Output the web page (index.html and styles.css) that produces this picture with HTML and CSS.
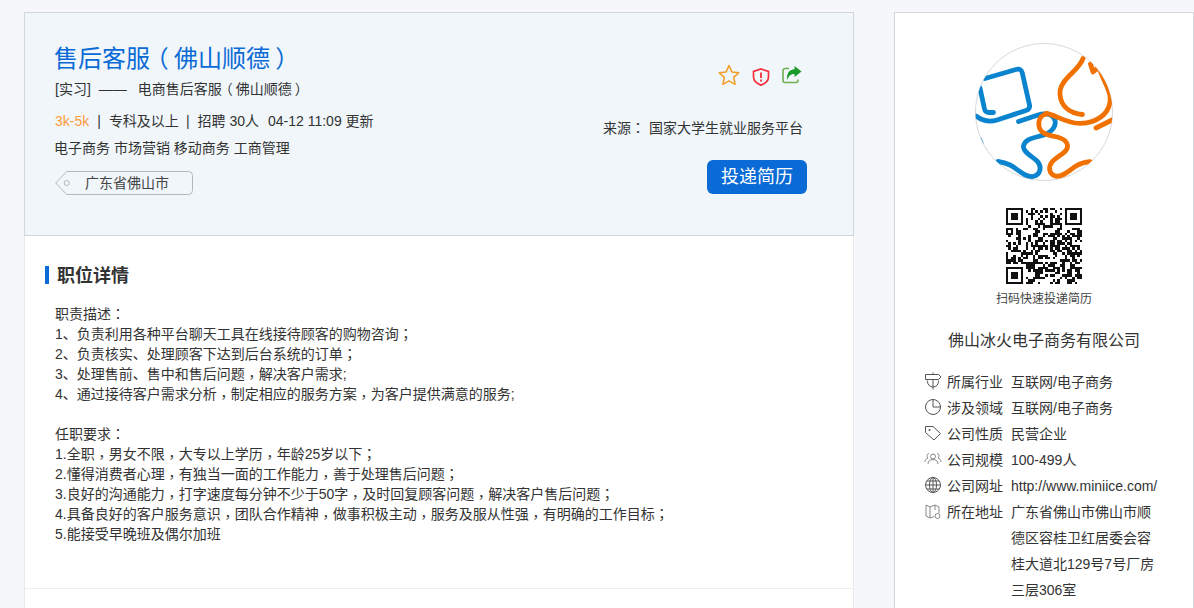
FILE: index.html
```html
<!DOCTYPE html>
<html lang="zh-CN">
<head>
<meta charset="utf-8">
<title>售后客服（佛山顺德）</title>
<link rel="stylesheet" href="styles.css">
</head>
<body>
<div class="page">
  <main class="job">
    <header class="job-head">
      <div class="head-left">
        <h1 class="job-title">售后客服<span class="pp">（</span>佛山顺德<span class="pp">）</span></h1>
        <div class="job-sub"><span class="kind">[实习]</span><span class="dash">——</span><span>电商售后客服<span class="pp">（</span>佛山顺德<span class="pp">）</span></span></div>
        <div class="job-meta"><span class="salary">3k-5k</span><span class="sep">|</span><span class="edu">专科及以上</span><span class="sep">|</span><span>招聘 30人</span><span class="time">04-12 11:09 更新</span></div>
        <div class="job-tags">电子商务 市场营销 移动商务 工商管理</div>
        <div class="place">
          <svg class="place-bg" width="139" height="24" viewBox="0 0 139 24"><path d="M12.700.5H134.500a4 4 0 0 1 4 4v15a4 4 0 0 1-4 4H12.700L1.700 12z" fill="none" stroke="#b4b8bc"/><circle cx="12.700" cy="12" r="2.500" fill="none" stroke="#b4b8bc"/></svg>
          <span class="place-name">广东省佛山市</span>
        </div>
      </div>
      <div class="head-right">
        <div class="actions">
          <svg width="22" height="22" viewBox="0 0 22 22"><path d="M11 1.500l2.900 6.400 6.900.8-5.100 4.700 1.400 6.900L11 16.900l-6.100 3.400 1.400-6.900L1.200 8.700l6.900-.8z" fill="none" stroke="#f49b26" stroke-width="1.500" stroke-linejoin="round"/></svg>
          <svg class="shield" width="18" height="18" viewBox="0 0 18 18"><path d="M9 1l7.500 2.400v5.400c0 3.900-3 6.700-7.500 8.300-4.500-1.600-7.500-4.400-7.500-8.300V3.400z" fill="none" stroke="#f5303d" stroke-width="1.700"/><path d="M9 4.500v5.500M9 11.500v2" stroke="#f5303d" stroke-width="1.800"/></svg>
          <svg width="20" height="18" viewBox="0 0 20 18"><path d="M7 2.500H3a2 2 0 0 0-2 2v10a2 2 0 0 0 2 2h11a2 2 0 0 0 2-2v-1" fill="none" stroke="#6fb04f" stroke-width="1.600"/><path d="M12.500 0l7 5.500-7 5.500V8C9 8 7 9.500 5 14 4.500 7.500 7 3.500 12.500 3.200z" fill="#1a9a2a"/></svg>
        </div>
        <div class="source"><span class="source-label">来源<span class="pc">：</span></span><span>国家大学生就业服务平台</span></div>
        <a class="apply">投递简历</a>
      </div>
    </header>
    <section class="detail">
      <h2 class="detail-title">职位详情</h2>
      <div class="detail-body">
        <p>职责描述<span class="pc">：</span></p>
        <p>1、负责利用各种平台聊天工具在线接待顾客的购物咨询<span class="pc">；</span></p>
        <p>2、负责核实、处理顾客下达到后台系统的订单<span class="pc">；</span></p>
        <p>3、处理售前、售中和售后问题<span class="cm">，</span>解决客户需求;</p>
        <p>4、通过接待客户需求分析<span class="cm">，</span>制定相应的服务方案<span class="cm">，</span>为客户提供满意的服务;</p>
        <p class="blank">&nbsp;</p>
        <p>任职要求<span class="pc">：</span></p>
        <p>1.全职<span class="cm">，</span>男女不限<span class="cm">，</span>大专以上学历<span class="cm">，</span>年龄25岁以下<span class="pc">；</span></p>
        <p>2.懂得消费者心理<span class="cm">，</span>有独当一面的工作能力<span class="cm">，</span>善于处理售后问题<span class="pc">；</span></p>
        <p>3.良好的沟通能力<span class="cm">，</span>打字速度每分钟不少于50字<span class="cm">，</span>及时回复顾客问题<span class="cm">，</span>解决客户售后问题<span class="pc">；</span></p>
        <p>4.具备良好的客户服务意识<span class="cm">，</span>团队合作精神<span class="cm">，</span>做事积极主动<span class="cm">，</span>服务及服从性强<span class="cm">，</span>有明确的工作目标<span class="pc">；</span></p>
        <p>5.能接受早晚班及偶尔加班</p>
      </div>
    </section>
    <div class="next-section"></div>
  </main>
  <aside class="company">
    <div class="logo">
      <svg width="138" height="138" viewBox="0 0 138 138">
        <defs><clipPath id="logo-clip"><circle cx="69" cy="69" r="68.500"/></clipPath></defs>
        <circle cx="69" cy="69" r="68.500" fill="#fff" stroke="#d8d8d8"/>
        <g clip-path="url(#logo-clip)" fill="none" stroke-width="4.800" stroke-linecap="round" stroke-linejoin="round">
          <g stroke="#0b84d0">
            <path d="M18.500 69.500H14C11 69.500 10 68 9.500 66L5 45"/>
            <path d="M10 35.500L41 26.500C44.500 25.500 46.500 26.500 47.300 30L54.500 62C55 65 53.500 66.700 51 67.500L22 77C14 79.500 7 77.500 1 73"/>
            <path d="M43.500 78.500L63 72C70 69.500 77 71 79.500 76C82 82 78 88 70 91.500C62 94.500 50 95 48.500 103C47.500 109 57 113 62 118C67 123 66 132 58 133.500C50 135 43 126 35 122C31 120 27 119 23 118.500"/>
          </g>
          <path d="M6 95L8 100" stroke="#0b84d0" stroke-width="1.500" opacity=".5"/>
          <g stroke="#f07000">
            <path d="M108 15.500C106 22 99 28 94 33C87 40 84 46 85 52C86 62 93 70 107.500 71.500"/>
            <path d="M71 70.500C78 71 88 78 100 80C112 82 125 77 131 69C136 62 136 53 133 46C130 38 126 32 124 24L118 29L115.500 21"/>
            <path d="M121 85L137 77"/>
            <path d="M71.500 71C65 72 63 78 64 83C65 90 72 92 80 93.500C88 95 93 99 92.500 104C92 110 82 113 77 119C73 124 74 131 80 133C87 135 95 127 101 123C106 120 110 119 115 118.700"/>
          </g>
        </g>
      </svg>
    </div>
    <div class="qr" id="qr"></div>
    <div class="qr-tip">扫码快速投递简历</div>
    <div class="company-name">佛山冰火电子商务有限公司</div>
    <dl class="info">
      <div class="info-row"><dt><svg viewBox="0 0 18 18"><path d="M1.500 2.500h13L17 5l-2.500 2.500h-13zM9 .5v2M9 7.500v10M3.500 8.500v1a5.500 5.500 0 0 0 11 0v-1" fill="none" stroke="#555"/></svg>所属行业</dt><dd>互联网/电子商务</dd></div>
      <div class="info-row"><dt><svg viewBox="0 0 18 18"><circle cx="9" cy="9" r="7.500" fill="none" stroke="#555"/><path d="M9 1.500V9h7.500" fill="none" stroke="#555"/></svg>涉及领域</dt><dd>互联网/电子商务</dd></div>
      <div class="info-row"><dt><svg viewBox="0 0 18 18"><path d="M1.500 2.500h7.500l7.500 7-6.500 6.500-8.500-7.500z" fill="none" stroke="#555"/><circle cx="5.500" cy="6" r="1" fill="#555"/></svg>公司性质</dt><dd>民营企业</dd></div>
      <div class="info-row"><dt><svg viewBox="0 0 18 18"><circle cx="9" cy="6.500" r="2.500" fill="none" stroke="#888"/><path d="M4 14c0-3 2-4.500 5-4.500s5 1.500 5 4.500M1 12c0-2 1-3.500 3-4M17 12c0-2-1-3.500-3-4M5 3.500a2.500 2.500 0 0 0-1 4.500M13 3.500a2.500 2.500 0 0 1 1 4.500" fill="none" stroke="#888"/></svg>公司规模</dt><dd>100-499人</dd></div>
      <div class="info-row"><dt><svg viewBox="0 0 18 18"><circle cx="9" cy="9" r="7.500" fill="none" stroke="#555"/><ellipse cx="9" cy="9" rx="3.500" ry="7.500" fill="none" stroke="#555"/><path d="M1.500 9h15M9 1.500v15M3 5h12M3 13h12" fill="none" stroke="#555"/></svg>公司网址</dt><dd>http://www.miniice.com/</dd></div>
      <div class="info-row"><dt><svg viewBox="0 0 18 18"><path d="M2 3l4 2 5-2 4 2v6M2 3v11l4 2 4-1.500M6 5v11M11 3v5" fill="none" stroke="#888"/><circle cx="13.500" cy="14" r="2.500" fill="none" stroke="#888"/></svg>所在地址</dt><dd>广东省佛山市佛山市顺德区容桂卫红居委会容桂大道北129号7号厂房三层306室</dd></div>
    </dl>
  </aside>
</div>
<script src="qr.js"></script>
</body>
</html>
```
FILE: qr.js
```js
(function () {
  var n = 31, s = '';
  function finder(x, y) {
    var dx = x - (x < 10 ? 0 : n - 7), dy = y - (y < 10 ? 0 : n - 7);
    if (dx < 0 || dy < 0 || dx > 6 || dy > 6) return null;
    return dx === 0 || dy === 0 || dx === 6 || dy === 6 || (dx > 1 && dx < 5 && dy > 1 && dy < 5);
  }
  var seed = 12345;
  function rnd() { seed = (seed * 1103515245 + 12345) & 0x7fffffff; return (seed >> 16) & 1; }
  for (var y = 0; y < n; y++) {
    for (var x = 0; x < n; x++) {
      var inCorner = (x < 8 && y < 8) || (x > n - 9 && y < 8) || (x < 8 && y > n - 9);
      var on;
      if (inCorner) { var f = finder(x, y); on = f === null ? false : f; }
      else on = !!rnd();
      if (on) s += '<rect x="' + x + '" y="' + y + '" width="1" height="1"/>';
    }
  }
  document.getElementById('qr').innerHTML =
    '<svg width="76" height="76" viewBox="0 0 31 31" shape-rendering="crispEdges" fill="#111">' + s + '</svg>';
})();
```
FILE: styles.css
```css
* { box-sizing: border-box; }
html, body { margin: 0; padding: 0; height: 608px; overflow: hidden; }
body {
  background: #f5f7fa;
  color: #333;
  font-family: "Liberation Sans", "Noto Sans CJK SC", sans-serif;
  font-size: 14px;
}
.pc, .cm { font-family: "Liberation Sans", "Noto Sans CJK TC", sans-serif; font-feature-settings: "locl" 0; }
.cm { display: inline-block; transform: translateY(3px); }
.pp { display: inline-block; width: 1em; text-align: center; font-feature-settings: "palt" 1; }
.page { display: flex; align-items: flex-start; gap: 40px; padding: 12px 0 0 24px; }
.job {
  width: 830px;
  height: 700px;
  flex: none;
  background: #fff;
  border: 1px solid #e8e9eb;
  border-top: 0;
  border-bottom: 0;
}
.job-head {
  display: flex;
  justify-content: space-between;
  height: 224px;
  margin: 0 -1px;
  padding: 30px 46px 0 29px;
  background: #f0f6fa;
  border: 1px solid #d0d6da;
}
.job-title { margin: 0; font-size: 24px; line-height: 32px; font-weight: 400; color: #0a6ad6; }
.job-sub { display: flex; margin-top: 4px; font-size: 14px; line-height: 20px; color: #333; }
.kind { margin-left: 1px; }
.dash { margin: 0 11px 0 8px; }
.job-meta { display: flex; margin-top: 12px; line-height: 20px; font-size: 14px; color: #333; }
.salary { color: #ff9c3c; margin-left: 1px; }
.edu { margin-right: -1px; }
.sep { margin: 0 8px; color: #333; }
.time { margin-left: 9px; }
.job-tags { margin-top: 7px; line-height: 20px; font-size: 14px; color: #333; }
.place { position: relative; width: 139px; height: 24px; margin-top: 13px; display: flex; align-items: center; padding: 0 0 2px 31px; }
.place-bg { position: absolute; left: 0; top: 0; }
.place-name { position: relative; font-size: 14px; color: #444; }
.head-right { display: flex; flex-direction: column; align-items: flex-end; }
.actions { display: flex; align-items: center; gap: 12px; margin-top: 21px; margin-right: 5px; }
.shield { margin-top: 4px; }
.source { margin-top: 32px; margin-right: 4px; font-size: 14px; line-height: 20px; color: #333; }
.source-label { margin-right: 4px; }
.apply {
  display: block;
  width: 100px;
  height: 34px;
  margin-top: 22px;
  border-radius: 6px;
  background: #0a6ad6;
  color: #fff;
  font-size: 18px;
  line-height: 34px;
  text-align: center;
}
.detail { padding: 30px 20px 0; height: 353px; border-bottom: 1px solid #ededed; }
.detail-title {
  margin: 0;
  height: 18px;
  padding-left: 8px;
  border-left: 4px solid #0a6ad6;
  font-size: 18px;
  line-height: 20px;
  font-weight: 700;
  color: #333;
}
.detail-body { margin-top: 20px; padding-left: 10px; font-size: 14px; line-height: 20px; color: #333; }
.detail-body p { margin: 0; }
.company {
  flex: none;
  width: 300px;
  height: 700px;
  padding-top: 30px;
  background: #fff;
  border: 1px solid #d5d7d9;
  display: flex;
  flex-direction: column;
  align-items: center;
}
.logo { height: 138px; }
.logo svg { display: block; }
.qr { margin-top: 27px; height: 76px; }
.qr svg { display: block; }
.qr-tip { margin-top: 6px; font-size: 12px; line-height: 18px; color: #444; }
.company-name { margin-top: 21px; font-size: 16px; line-height: 24px; color: #333; }
.info { align-self: stretch; margin: 16px 0 0; padding-left: 29px; }
.info-row { display: flex; line-height: 26px; font-size: 14px; }
.info-row dt { display: flex; align-items: flex-start; flex: none; width: 87px; color: #333; }
.info-row dt svg { flex: none; width: 18px; height: 18px; margin: 3px 5px 0 0; }
.info-row dd { margin: 0; width: 150px; color: #333; }
```
